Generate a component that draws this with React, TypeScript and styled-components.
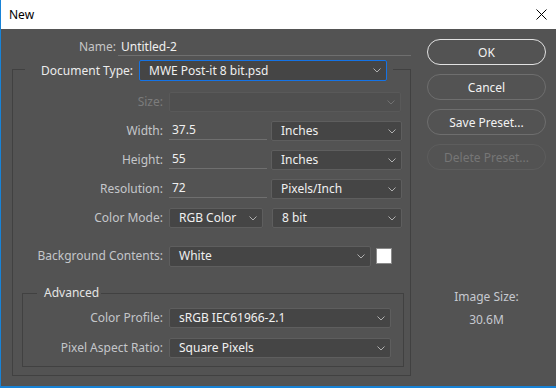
import styled, { createGlobalStyle } from 'styled-components';

const GlobalStyle = createGlobalStyle`
  html, body {
    margin: 0;
    padding: 0;
    background: #535353;
  }
  * {
    box-sizing: border-box;
  }
`;

const Window = styled.div`
  width: 556px;
  height: 388px;
  display: flex;
  flex-direction: column;
  background: #535353;
  border-left: 1px solid #1883d7;
  border-bottom: 2px solid #1883d7;
  font-family: 'Noto Sans', 'Liberation Sans', sans-serif;
  font-size: 12px;
  overflow: hidden;
`;

const TitleBar = styled.div`
  height: 29px;
  flex: none;
  display: flex;
  align-items: center;
  justify-content: space-between;
  padding: 0 9px 0 8px;
  background: #fff;
  color: #000;
`;

const Title = styled.span`
  font-size: 12px;
  line-height: 16px;
`;

const CloseButton = styled.div`
  width: 12px;
  height: 12px;
  display: flex;
  align-items: center;
  justify-content: center;
`;

const Body = styled.div`
  flex: 1;
  display: flex;
  padding: 10px 0 0 11px;
`;

const FormColumn = styled.div`
  width: 399px;
  display: flex;
  flex-direction: column;
`;

const NameRow = styled.div`
  display: flex;
  height: 17px;
`;

const NameLabel = styled.span`
  width: 104px;
  text-align: right;
  color: #c6c6c6;
  line-height: 16px;
  margin-right: 2px;
`;

const NameInput = styled.div`
  width: 293px;
  height: 17px;
  padding-left: 3px;
  line-height: 16px;
  color: #f0f0f0;
  border-bottom: 1px solid #6f6f6f;
`;

const GroupBox = styled.div<{ $inset?: boolean }>`
  display: flex;
  flex-direction: column;
  border: 1px solid #414141;
  margin: ${({ $inset }) => ($inset ? '27px 6px 8px 9px' : '13px 0 0 0')};
  padding-bottom: ${({ $inset }) => ($inset ? '8px' : '0')};
`;

const GroupHeader = styled.div<{ $small?: boolean }>`
  align-self: flex-start;
  display: flex;
  align-items: center;
  background: #535353;
  margin-top: ${({ $small }) => ($small ? '-9px' : '-10px')};
  margin-left: ${({ $small }) => ($small ? '14px' : '12px')};
  padding: ${({ $small }) => ($small ? '0 2px 0 7px' : '0 6px 0 0')};
  height: ${({ $small }) => ($small ? '16px' : '21px')};
`;

const HeaderLabel = styled.span`
  width: 108px;
  text-align: right;
  color: #ececec;
  margin-right: 6px;
  line-height: 16px;
`;

const AdvancedLabel = styled.span`
  color: #e4e4e4;
  line-height: 16px;
`;

const Fields = styled.div<{ $top: number; $gap: number }>`
  display: flex;
  flex-direction: column;
  padding-top: ${({ $top }) => $top}px;
  gap: ${({ $gap }) => $gap}px;
`;

const Row = styled.div<{ $extraTop?: number }>`
  display: flex;
  align-items: center;
  height: 20px;
  margin-top: ${({ $extraTop }) => $extraTop ?? 0}px;
`;

const Label = styled.span<{ $width: number; $disabled?: boolean }>`
  width: ${({ $width }) => $width}px;
  flex: none;
  text-align: right;
  padding-right: 6px;
  color: ${({ $disabled }) => ($disabled ? '#7c7c7c' : '#c4c6ca')};
  line-height: 16px;
  white-space: nowrap;
`;

const SelectBox = styled.div<{ $width: number; $focused?: boolean; $disabled?: boolean; $height?: number }>`
  width: ${({ $width }) => $width}px;
  height: ${({ $height }) => $height ?? 20}px;
  flex: none;
  display: flex;
  align-items: center;
  justify-content: space-between;
  padding: 0 5px 0 9px;
  background: ${({ $disabled }) => ($disabled ? '#4f4f4f' : '#454545')};
  border: 1px solid
    ${({ $focused, $disabled }) => ($focused ? '#1473e6' : $disabled ? '#595959' : '#5e5e5e')};
  border-radius: 2px;
  color: #f0f0f0;
  line-height: 16px;
  white-space: nowrap;

  svg {
    flex: none;
    opacity: ${({ $disabled }) => ($disabled ? 0.35 : 1)};
  }
`;

const UnderlineInput = styled.div`
  width: 98px;
  height: 19px;
  flex: none;
  align-self: flex-start;
  padding-left: 3px;
  margin-right: 4px;
  color: #f0f0f0;
  line-height: 17px;
  border-bottom: 1px solid #6f6f6f;
`;

const Spacer = styled.div<{ $width: number }>`
  width: ${({ $width }) => $width}px;
  flex: none;
`;

const Swatch = styled.div`
  width: 16px;
  height: 16px;
  margin-left: 5px;
  background: #fff;
  border: 1px solid #8a8a8a;
`;

const SideColumn = styled.div`
  width: 119px;
  margin-left: 16px;
  display: flex;
  flex-direction: column;
  gap: 9px;
`;

const Button = styled.div<{ $primary?: boolean; $disabled?: boolean }>`
  height: 26px;
  border-radius: 13px;
  display: flex;
  align-items: center;
  justify-content: center;
  border: 1px solid
    ${({ $primary, $disabled }) => ($primary ? '#e2e2e2' : $disabled ? '#5d5d5d' : '#6e6e6e')};
  color: ${({ $disabled }) => ($disabled ? '#767676' : '#f2f2f2')};
  font-size: 12px;
`;

const ImageSize = styled.div`
  margin-top: 110px;
  display: flex;
  flex-direction: column;
  align-items: center;
  gap: 7px;
  color: #c6c9d0;
  line-height: 16px;
`;

function Chevron() {
  return (
    <svg width="8" height="5" viewBox="0 0 8 5">
      <path d="M0.5 0.5 L4 4 L7.5 0.5" fill="none" stroke="#b0b0b0" strokeWidth="1" />
    </svg>
  );
}

function Select({
  value,
  width,
  focused,
  disabled,
  height,
}: {
  value?: string;
  width: number;
  focused?: boolean;
  disabled?: boolean;
  height?: number;
}) {
  return (
    <SelectBox $width={width} $focused={focused} $disabled={disabled} $height={height}>
      <span>{value}</span>
      <Chevron />
    </SelectBox>
  );
}

function App() {
  return (
    <>
      <GlobalStyle />
      <Window>
        <TitleBar>
          <Title>New</Title>
          <CloseButton>
            <svg width="11" height="11" viewBox="0 0 11 11">
              <path d="M0.5 0.5 L10.5 10.5 M10.5 0.5 L0.5 10.5" stroke="#000" strokeWidth="1" />
            </svg>
          </CloseButton>
        </TitleBar>
        <Body>
          <FormColumn>
            <NameRow>
              <NameLabel>Name:</NameLabel>
              <NameInput>Untitled-2</NameInput>
            </NameRow>
            <GroupBox>
              <GroupHeader>
                <HeaderLabel>Document Type:</HeaderLabel>
                <Select value="MWE Post-it 8 bit.psd" width={248} height={21} focused />
              </GroupHeader>
              <Fields $top={11} $gap={9}>
                <Row>
                  <Label $width={156} $disabled>
                    Size:
                  </Label>
                  <Select width={232} disabled />
                </Row>
                <Row>
                  <Label $width={156}>Width:</Label>
                  <UnderlineInput>37.5</UnderlineInput>
                  <Select value="Inches" width={131} />
                </Row>
                <Row>
                  <Label $width={156}>Height:</Label>
                  <UnderlineInput>55</UnderlineInput>
                  <Select value="Inches" width={131} />
                </Row>
                <Row>
                  <Label $width={156}>Resolution:</Label>
                  <UnderlineInput>72</UnderlineInput>
                  <Select value="Pixels/Inch" width={131} />
                </Row>
                <Row>
                  <Label $width={156}>Color Mode:</Label>
                  <Select value="RGB Color" width={94} />
                  <Spacer $width={9} />
                  <Select value="8 bit" width={130} />
                </Row>
                <Row $extraTop={9}>
                  <Label $width={156}>Background Contents:</Label>
                  <Select value="White" width={202} height={21} />
                  <Swatch />
                </Row>
              </Fields>
              <GroupBox $inset>
                <GroupHeader $small>
                  <AdvancedLabel>Advanced</AdvancedLabel>
                </GroupHeader>
                <Fields $top={7} $gap={10}>
                  <Row>
                    <Label $width={146}>Color Profile:</Label>
                    <Select value="sRGB IEC61966-2.1" width={222} />
                  </Row>
                  <Row>
                    <Label $width={146}>Pixel Aspect Ratio:</Label>
                    <Select value="Square Pixels" width={222} />
                  </Row>
                </Fields>
              </GroupBox>
            </GroupBox>
          </FormColumn>
          <SideColumn>
            <Button $primary>OK</Button>
            <Button>Cancel</Button>
            <Button>Save Preset...</Button>
            <Button $disabled>Delete Preset...</Button>
            <ImageSize>
              <span>Image Size:</span>
              <span>30.6M</span>
            </ImageSize>
          </SideColumn>
        </Body>
      </Window>
    </>
  );
}

export default App;
